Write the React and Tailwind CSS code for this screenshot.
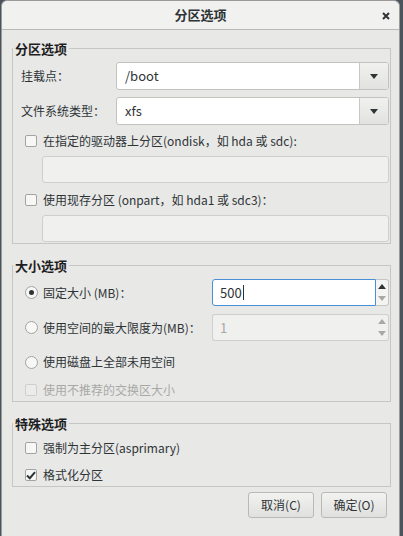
import React from "react";

const font = { fontFamily: "'Noto Sans CJK SC', 'Noto Sans', sans-serif" };

const Arrow = ({ dir = "down", color = "#2e3436" }) => (
  <svg width="8" height="5" viewBox="0 0 8 5">
    {dir === "down" ? (
      <path d="M0 0 H8 L4 5 Z" fill={color} />
    ) : (
      <path d="M0 5 H8 L4 0 Z" fill={color} />
    )}
  </svg>
);

const Check = ({ checked = false, disabled = false }) => (
  <span
    className={`flex h-[12px] w-[12px] shrink-0 items-center justify-center rounded-[2px] border ${
      disabled ? "border-[#cfcfcd] bg-[#ececeb]" : "border-[#a3a3a1] bg-[#f7f7f6]"
    }`}
  >
    {checked && (
      <svg width="10" height="9" viewBox="0 0 10 9">
        <path d="M1 4.5 L3.8 7.2 L9 1.2" fill="none" stroke="#2e3436" strokeWidth="2" />
      </svg>
    )}
  </span>
);

const Radio = ({ on = false }) => (
  <span className="flex h-[13px] w-[13px] shrink-0 items-center justify-center rounded-full border border-[#a3a3a1] bg-[#f7f7f6]">
    {on && <span className="h-[5px] w-[5px] rounded-full bg-[#2e3436]" />}
  </span>
);

const Combo = ({ value }) => (
  <div className="flex h-[28px] flex-1 overflow-hidden rounded-[3px] border border-[#c2c2bf] bg-white">
    <div className="flex flex-1 items-center pl-[8px] text-[13px] text-[#2e3436]">{value}</div>
    <div className="flex w-[29px] items-center justify-center border-l border-[#c9c9c6] bg-gradient-to-b from-[#f1f1f0] to-[#e2e2e0]">
      <Arrow />
    </div>
  </div>
);

const Spin = ({ value, focused = false }) => (
  <div className="flex h-[27px] w-[177px] shrink-0">
    <div
      className={`flex flex-1 items-center pl-[7px] text-[13px] ${
        focused
          ? "border border-[#4a90d9] bg-white text-[#2e3436]"
          : "border border-[#cfcfcc] border-r-0 bg-[#f0f0ee] text-[#a8a8a6]"
      } rounded-l-[3px]`}
    >
      {value}
      {focused && <span className="ml-[1px] h-[15px] w-[1px] bg-[#2e3436]" />}
    </div>
    <div
      className={`flex w-[13px] flex-col rounded-r-[3px] border border-l-0 ${
        focused ? "border-[#c6c6c3] bg-[#f4f4f3]" : "border-[#cfcfcc] bg-[#f0f0ee]"
      }`}
    >
      <div className="flex flex-1 items-center justify-center">
        <Arrow dir="up" color={focused ? "#2e3436" : "#a8a8a6"} />
      </div>
      <div className="flex flex-1 items-center justify-center">
        <Arrow color="#a8a8a6" />
      </div>
    </div>
  </div>
);

const Group = ({ title, children, className = "" }) => (
  <fieldset className={`border border-[#c6c6c4] pr-[1px] ${className}`}>
    <legend className="px-[2px] text-[13px] font-bold leading-[17px] text-[#1e1e1e]">{title}</legend>
    {children}
  </fieldset>
);

const CheckRow = ({ label, checked, disabled, className = "" }) => (
  <div className={`flex h-[20px] items-center pl-[12px] ${className}`}>
    <Check checked={checked} disabled={disabled} />
    <span
      className={`ml-[6px] whitespace-nowrap text-[12px] leading-[16px] ${
        disabled ? "text-[#a8a8a6]" : "text-[#2e3436]"
      }`}
    >
      {label}
    </span>
  </div>
);

const RadioRow = ({ label, on, className = "", children }) => (
  <div className={`flex items-center pl-[12px] ${className}`}>
    <Radio on={on} />
    <span className="ml-[5px] flex-1 whitespace-nowrap text-[12px] leading-[16px] text-[#2e3436]">{label}</span>
    {children}
  </div>
);

export default function App() {
  return (
    <div className="h-[536px] w-[403px] overflow-hidden bg-[#4b545c] pl-[1px] pr-[3px]" style={font}>
      <div className="h-full rounded-t-[6px] border border-b-0 border-[#9a9a98] bg-[#e8e8e7]">
        <div className="relative flex h-[29px] items-center justify-center rounded-t-[6px] border-b border-[#b9b9b6] bg-[#f1f1f0]">
          <span className="text-[13px] font-bold text-[#2e3436]">分区选项</span>
          <svg className="absolute right-[9px] top-[11px]" width="8" height="8" viewBox="0 0 8 8">
            <path d="M1 1 L7 7 M7 1 L1 7" stroke="#2e3436" strokeWidth="2" />
          </svg>
        </div>

        <div className="pl-[10px] pr-[8px] pt-[10px]">
          <Group title="分区选项">
            <div className="mt-[5px] flex items-center pl-[8px]">
              <span className="w-[95px] text-[12px] text-[#2e3436]">挂载点：</span>
              <Combo value="/boot" />
            </div>
            <div className="mt-[7px] flex items-center pl-[8px]">
              <span className="w-[95px] text-[12px] text-[#2e3436]">文件系统类型：</span>
              <Combo value="xfs" />
            </div>
            <CheckRow className="mt-[5px] h-[22px]" label="在指定的驱动器上分区(ondisk，如 hda 或 sdc):" />
            <div className="ml-[29px] mt-[4px] h-[27px] rounded-[3px] border border-[#cfcfcc] bg-[#f0f0ee]" />
            <CheckRow className="mt-[6px] h-[22px]" label="使用现存分区 (onpart，如 hda1 或 sdc3)：" />
            <div className="mb-[1px] ml-[29px] mt-[4px] h-[27px] rounded-[3px] border border-[#cfcfcc] bg-[#f0f0ee]" />
          </Group>

          <Group title="大小选项" className="mt-[13px]">
            <RadioRow className="mt-[5px]" on label="固定大小 (MB)：">
              <Spin value="500" focused />
            </RadioRow>
            <RadioRow className="mt-[8px]" label="使用空间的最大限度为(MB)：">
              <Spin value="1" />
            </RadioRow>
            <RadioRow className="mt-[10px] h-[22px]" label="使用磁盘上全部未用空间" />
            <CheckRow className="mb-[1px] mt-[7px]" disabled label="使用不推荐的交换区大小" />
          </Group>

          <Group title="特殊选项" className="mt-[13px]">
            <CheckRow className="mt-[6px]" label="强制为主分区(asprimary)" />
            <CheckRow className="mb-[1px] mt-[7px]" checked label="格式化分区" />
          </Group>

          <div className="mt-[5px] flex justify-end gap-[7px] pr-[4px]">
            <button className="h-[26px] w-[66px] rounded-[3px] border border-[#b9b9b6] bg-gradient-to-b from-[#f2f2f1] to-[#e0e0de] text-[12px] text-[#2e3436]">
              取消(C)
            </button>
            <button className="h-[26px] w-[66px] rounded-[3px] border border-[#b9b9b6] bg-gradient-to-b from-[#f2f2f1] to-[#e0e0de] text-[12px] text-[#2e3436]">
              确定(O)
            </button>
          </div>
        </div>
      </div>
    </div>
  );
}
